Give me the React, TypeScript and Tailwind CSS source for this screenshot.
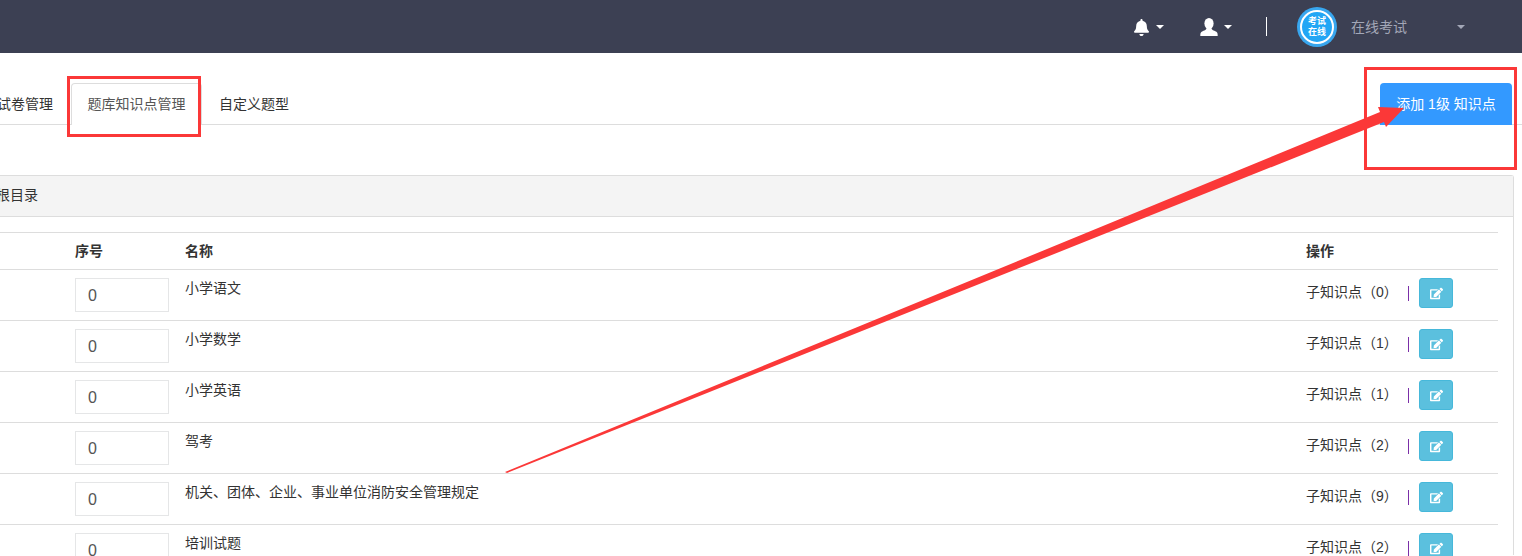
import React from "react";
import { FaBell, FaEdit } from "react-icons/fa";

const font = { fontFamily: '"Liberation Sans","Noto Sans CJK SC",sans-serif' };

const rows = [
  ["小学语文", "0"],
  ["小学数学", "1"],
  ["小学英语", "1"],
  ["驾考", "2"],
  ["机关、团体、企业、事业单位消防安全管理规定", "9"],
  ["培训试题", "2"],
];

function Caret({ className }: { className: string }) {
  return <span className={`h-0 w-0 border-x-4 border-t-4 border-x-transparent ${className}`} />;
}

function UserIcon() {
  return (
    <svg width="18" height="18" viewBox="0 0 18 18" fill="white">
      <ellipse cx="9" cy="5.5" rx="4.6" ry="5.5" />
      <path d="M6.5 10 C6.5 12 4 12.5 2 13.5 C0.6 14.2 0.3 15.5 0.3 18 H17.7 C17.7 15.5 17.4 14.2 16 13.5 C14 12.5 11.500 12 11.500 10 Z" />
    </svg>
  );
}

function Row({ name, count }: { name: string; count: string }) {
  return (
    <div className="flex h-[51px] shrink-0 border-t border-[#dddddd]">
      <div className="w-[75px] shrink-0" />
      <div className="w-[110px] shrink-0 pt-2">
        <div className="flex h-[34px] w-[94px] items-center border border-[#e5e6e7] pl-3 pt-[2px] text-base text-[#555555]">0</div>
      </div>
      <div className="flex-1 pt-[9px] text-sm leading-[18px] text-[#333333]">{name}</div>
      <div className="flex w-[192px] shrink-0 pt-2 text-sm text-[#333333]">
        <div className="flex h-[30px] w-[113px] items-center">
          <span className="w-[102px] whitespace-nowrap pb-[2px]">子知识点（{count}）</span>
          <span className="h-[15px] w-px bg-[#7b2fa8]" />
        </div>
        <div className="flex h-[30px] w-[34px] items-center justify-center rounded-[3px] border border-[#46b8da] bg-[#5bc0de] text-white">
          <FaEdit size={13} />
        </div>
      </div>
    </div>
  );
}

export default function App() {
  return (
    <div className="relative h-[556px] w-[1522px] overflow-hidden bg-white" style={font}>
      <header className="flex h-[53px] items-center justify-end bg-[#3c4053] text-white">
        <div className="flex w-[67px] items-center gap-[6px] pt-px">
          <FaBell size={17} />
          <Caret className="border-t-white" />
        </div>
        <div className="flex w-[66px] items-center gap-[6px] pt-px">
          <UserIcon />
          <Caret className="border-t-white" />
        </div>
        <div className="h-[19px] w-px bg-white" />
        <div className="ml-[30px] h-10 w-10 rounded-full bg-[#38a6ee] p-[3px]">
          <div className="flex h-full w-full items-center justify-center rounded-full border-2 border-white bg-[#22a6f5]">
            <span className="text-center text-[9px] font-bold leading-[11px] text-white">考试<br />在线</span>
          </div>
        </div>
        <span className="ml-[14px] text-sm text-[#a3a7b7]">在线考试</span>
        <Caret className="ml-[50px] border-t-[#a3a7b7]" />
        <div className="w-[57px]" />
      </header>

      <div className="relative flex h-[72px] border-b border-[#dddddd] text-sm">
        <div className="flex w-[71px] items-end justify-end pb-[10px] text-[#333333]">
          <span className="whitespace-nowrap pr-[18px]">试卷管理</span>
        </div>
        <div className="mt-[30px] mb-[-1px] flex w-[131px] items-center justify-center rounded-t-[4px] border border-b-0 border-[#dddddd] bg-white pb-[2px] text-[#555555]">
          题库知识点管理
        </div>
        <div className="mt-[30px] flex items-center pl-[17px] text-[#333333]">自定义题型</div>
        <div className="ml-auto mr-[10px] mt-[30px] flex h-[42px] w-[132px] items-center justify-center rounded-t-[4px] bg-[#3399ff] text-white">
          添加 1级 知识点
        </div>
      </div>

      <section className="ml-[-20px] mr-[8px] mt-[50px] flex h-[380px] flex-col rounded-t-[3px] border border-b-0 border-[#dddddd]">
        <div className="flex h-[41px] shrink-0 items-center border-b border-[#dddddd] bg-[#f4f4f4] pb-[2px] pl-[15px] text-sm text-[#333333]">
          <span className="whitespace-nowrap">根目录</span>
        </div>
        <div className="ml-[19px] mr-[15px] mt-[15px] flex flex-col">
          <div className="flex h-[37px] shrink-0 items-center border-t border-[#dddddd] text-sm font-bold text-[#333333]">
            <div className="w-[75px]" />
            <div className="w-[110px]">序号</div>
            <div className="flex-1">名称</div>
            <div className="w-[192px]">操作</div>
          </div>
          {rows.map(([name, count]) => (
            <Row key={name} name={name} count={count} />
          ))}
        </div>
      </section>

      <div className="absolute left-[67px] top-[76px] h-[61px] w-[134px] border-[3px] border-[#fb3838]" />
      <div className="absolute left-[1364px] top-[67px] h-[103px] w-[153px] border-[3px] border-[#fb3838]" />
      <svg className="absolute left-0 top-0" width="1522" height="556" viewBox="0 0 1522 556">
        <polygon
          fill="#fb3838"
          points="505,472 1380,112 1378,107 1404,108 1386,127 1384,122 507,473"
        />
      </svg>
    </div>
  );
}
